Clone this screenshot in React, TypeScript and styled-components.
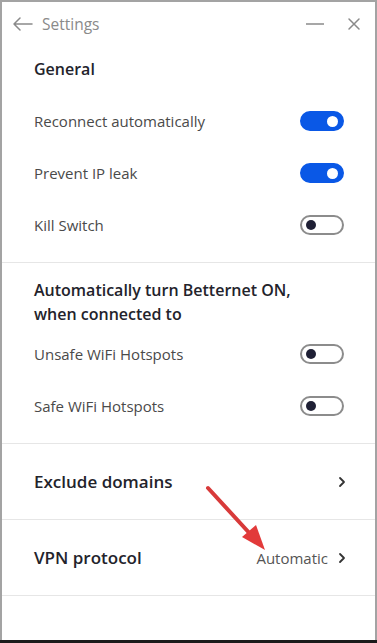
import { createGlobalStyle } from "styled-components"
import styled from "styled-components"

const GlobalStyle = createGlobalStyle`
  html, body {
    margin: 0;
    padding: 0;
    background: #1b1b1b;
  }
  * {
    box-sizing: border-box;
  }
`

type ToggleRow = { label: string; on: boolean }

const generalRows: ToggleRow[] = [
  { label: "Reconnect automatically", on: true },
  { label: "Prevent IP leak", on: true },
  { label: "Kill Switch", on: false },
]

const autoRows: ToggleRow[] = [
  { label: "Unsafe WiFi Hotspots", on: false },
  { label: "Safe WiFi Hotspots", on: false },
]

function Chevron() {
  return (
    <svg width="8" height="12" viewBox="0 0 8 12" fill="none">
      <path
        d="M2 2l4 4-4 4"
        stroke="#333"
        strokeWidth="1.8"
        strokeLinecap="round"
        strokeLinejoin="round"
      />
    </svg>
  )
}

function App() {
  return (
    <>
      <GlobalStyle />
      <Window>
        <Header>
          <TitleGroup>
            <svg width="21" height="14" viewBox="0 0 21 14" fill="none">
              <path
                d="M20 7H2M8 1L2 7l6 6"
                stroke="#8a8a8a"
                strokeWidth="1.5"
                strokeLinecap="round"
                strokeLinejoin="round"
              />
            </svg>
            <Title>Settings</Title>
          </TitleGroup>
          <WindowButtons>
            <svg width="20" height="14" viewBox="0 0 20 14">
              <path d="M1 7h18" stroke="#8a8a8a" strokeWidth="1.5" />
            </svg>
            <svg width="14" height="14" viewBox="0 0 14 14">
              <path
                d="M2 2l10 10M12 2L2 12"
                stroke="#8a8a8a"
                strokeWidth="1.5"
                strokeLinecap="round"
              />
            </svg>
          </WindowButtons>
        </Header>

        <Section $top={11}>
          <Heading $gap={14}>General</Heading>
          {generalRows.map((r) => (
            <Row key={r.label}>
              <Label>{r.label}</Label>
              <Toggle $on={r.on}>
                <Knob $on={r.on} />
              </Toggle>
            </Row>
          ))}
        </Section>

        <Section $top={15}>
          <Heading $gap={2}>
            Automatically turn Betternet ON,
            <br />
            when connected to
          </Heading>
          {autoRows.map((r) => (
            <Row key={r.label}>
              <Label>{r.label}</Label>
              <Toggle $on={r.on}>
                <Knob $on={r.on} />
              </Toggle>
            </Row>
          ))}
        </Section>

        <LinkRow>
          <LinkTitle>Exclude domains</LinkTitle>
          <LinkSide>
            <Chevron />
          </LinkSide>
        </LinkRow>

        <LinkRow>
          <LinkTitle>VPN protocol</LinkTitle>
          <LinkSide>
            <Value>Automatic</Value>
            <Chevron />
          </LinkSide>
        </LinkRow>

        <Arrow width="80" height="80" viewBox="0 0 80 80">
          <path d="M4 4L49 53" stroke="#d83a3a" strokeWidth="4" strokeLinecap="round" />
          <path d="M61 66L38 53L52 41Z" fill="#e23a3a" />
        </Arrow>
      </Window>
    </>
  )
}

const Window = styled.div`
  position: relative;
  width: 377px;
  height: 640px;
  background: #fff;
  border: 2px solid #a3a3a3;
  border-bottom: none;
  font-family: "Open Sans", "Noto Sans", sans-serif;
  overflow: hidden;
`

const Header = styled.div`
  height: 44px;
  display: flex;
  align-items: center;
  justify-content: space-between;
  padding: 0 14px 0 10px;
`

const TitleGroup = styled.div`
  display: flex;
  align-items: center;
  gap: 9px;
`

const Title = styled.span`
  font-size: 15.5px;
  color: #8a8a8a;
`

const WindowButtons = styled.div`
  display: flex;
  align-items: center;
  gap: 22px;
`

const Section = styled.div<{ $top: number }>`
  padding: ${({ $top }) => $top}px 32px 11px;
  border-bottom: 1px solid #e6e6e6;
`

const Heading = styled.div<{ $gap: number }>`
  font-size: 16px;
  font-weight: 600;
  line-height: 24px;
  color: #23232b;
  margin-bottom: ${({ $gap }) => $gap}px;
`

const Row = styled.div`
  height: 52px;
  display: flex;
  align-items: center;
  justify-content: space-between;
`

const Label = styled.span`
  font-size: 15px;
  color: #4a4a4a;
`

const Toggle = styled.div<{ $on: boolean }>`
  width: 44px;
  height: 20px;
  border-radius: 10px;
  display: flex;
  align-items: center;
  padding: 0 4px;
  justify-content: ${({ $on }) => ($on ? "flex-end" : "flex-start")};
  background: ${({ $on }) => ($on ? "#0a58e6" : "#fff")};
  border: 2px solid ${({ $on }) => ($on ? "#0a58e6" : "#8c8c8c")};
  margin-right: -1px;
`

const Knob = styled.span<{ $on: boolean }>`
  width: ${({ $on }) => ($on ? 11 : 10)}px;
  height: ${({ $on }) => ($on ? 11 : 10)}px;
  border-radius: 50%;
  background: ${({ $on }) => ($on ? "#fff" : "#1f2035")};
`

const LinkRow = styled.div`
  height: 76px;
  display: flex;
  align-items: center;
  justify-content: space-between;
  padding: 0 29px 0 32px;
  border-bottom: 1px solid #e6e6e6;
`

const LinkTitle = styled.span`
  font-size: 17px;
  font-weight: 600;
  color: #23232b;
`

const LinkSide = styled.div`
  display: flex;
  align-items: center;
  gap: 10px;
`

const Value = styled.span`
  font-size: 15px;
  color: #555;
`

const Arrow = styled.svg`
  position: absolute;
  left: 202px;
  top: 482px;
  pointer-events: none;
`

export default App
